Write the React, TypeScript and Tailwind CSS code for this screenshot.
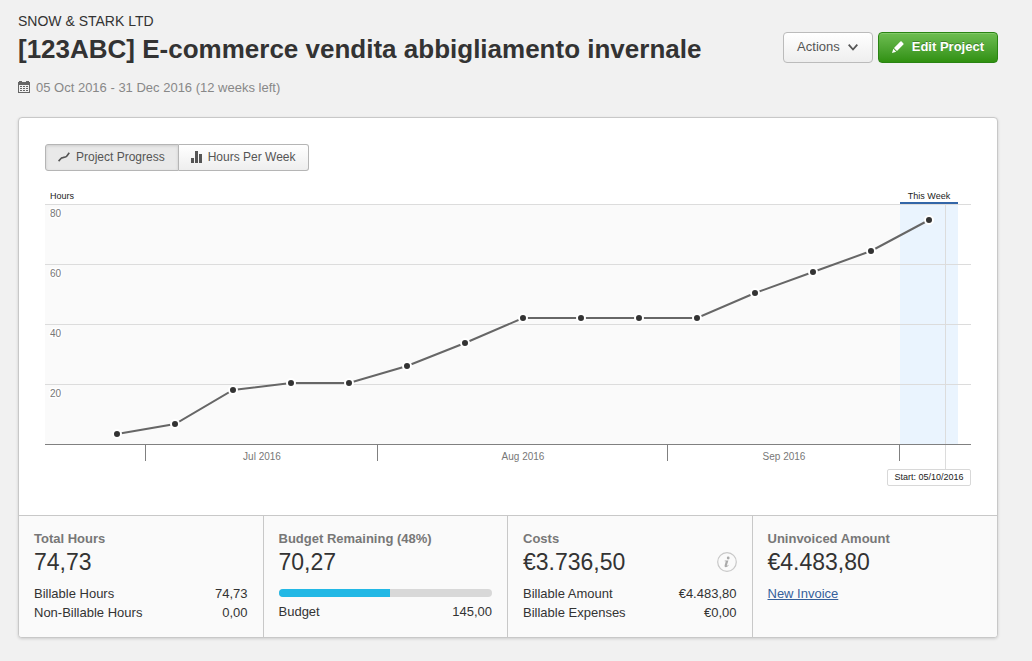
import React from "react";

const values = [247, 237, 203, 196, 196, 179, 156, 131, 131, 131, 131, 106, 85, 64, 33];
const points = values.map((y, i) => ({ x: 72 + i * 58, y }));

const gridLines = [
  { y: 17.5, label: "80" },
  { y: 77.5, label: "60" },
  { y: 137.5, label: "40" },
  { y: 197.5, label: "20" },
];

const months = [
  { x: 217, label: "Jul 2016" },
  { x: 478, label: "Aug 2016" },
  { x: 739, label: "Sep 2016" },
];

function CalendarIcon() {
  return (
    <svg width="12" height="14" viewBox="0 0 12 14" fill="#666" shapeRendering="crispEdges" aria-hidden="true">
      <path d="M0 1h1V0h3v1h4V0h3v1h1v11H0zM1 4v7h10V4z" fillRule="evenodd" />
      <path d="M2 5h2v1H2zM5 5h2v1H5zM8 5h2v1H8zM2 7h2v1H2zM5 7h2v1H5zM8 7h2v1H8zM2 9h2v1H2zM5 9h2v1H5zM8 9h2v1H8z" />
    </svg>
  );
}

function PencilIcon() {
  return (
    <svg width="12" height="12" viewBox="0 0 12 12" fill="#fff" aria-hidden="true">
      <path d="M8.4.6Q9 0 9.6.6L11.4 2.4Q12 3 11.4 3.6L5 10 2 7z" />
      <path d="M1.3 7.8L4.2 10.7 0 12z" />
    </svg>
  );
}

function ProgressIcon() {
  return (
    <svg width="12" height="12" viewBox="0 0 13 12" fill="none" stroke="#555" strokeWidth="1.8" aria-hidden="true">
      <path d="M.6 10.4L3.5 7.4Q4.2 6.7 5.2 6.6L8 6Q9 5.8 9.6 5L12.2 1.4" />
    </svg>
  );
}

function BarsIcon() {
  return (
    <svg width="11" height="12" viewBox="0 0 11 12" fill="#555" shapeRendering="crispEdges" aria-hidden="true">
      <path d="M0 7h3v5H0zM4 0h3v12H4zM8 3h3v9H8z" />
    </svg>
  );
}

function InfoIcon() {
  return (
    <svg width="20" height="20" viewBox="0 0 20 20" aria-hidden="true">
      <circle cx="10" cy="10" r="9.3" fill="none" stroke="#c8c8c8" strokeWidth="1.2" />
      <circle cx="11.2" cy="6" r="1.4" fill="#aaa" />
      <path d="M7.8 8.5H11.4L9.9 13.3Q9.7 14.1 10.3 13.7L11.3 12.8 11.7 13.2Q10.3 15.2 8.7 15.2 7.2 15.2 7.6 13.5L8.8 9.3H7.6z" fill="#aaa" />
    </svg>
  );
}

function ProgressChart() {
  return (
    <svg viewBox="0 0 926 300" className="block h-auto w-full" role="img" aria-label="Project progress in hours">
      <rect x="0" y="17" width="855" height="240" fill="#fafafa" />
      <rect x="855" y="17" width="58" height="240" fill="#eaf4fe" />
      {gridLines.map((g) => (
        <g key={g.label}>
          <line x1="0" x2="926" y1={g.y} y2={g.y} stroke="#dcdcdc" />
          <text x="5" y={g.y + 12.5} fontSize="10" fill="#777" stroke="#fff" strokeWidth="3" strokeLinejoin="round" paintOrder="stroke">
            {g.label}
          </text>
        </g>
      ))}
      <line x1="900.5" x2="900.5" y1="18" y2="282" stroke="#dcdcdc" />
      <rect x="855" y="15" width="58" height="2" fill="#3366a8" />
      <text x="5" y="12" fontSize="9" fill="#222">Hours</text>
      <text x="884" y="12" fontSize="9" fill="#222" textAnchor="middle">This Week</text>
      <line x1="0" x2="926" y1="257.5" y2="257.5" stroke="#808080" />
      {[100.5, 332.5, 622.5, 854.5].map((x) => (
        <line key={x} x1={x} x2={x} y1="258" y2="274" stroke="#808080" />
      ))}
      {months.map((m) => (
        <text key={m.label} x={m.x} y="273" fontSize="10" fill="#777" textAnchor="middle">{m.label}</text>
      ))}
      <polyline points={points.map((p) => `${p.x},${p.y}`).join(" ")} fill="none" stroke="#666" strokeWidth="2" />
      {points.map((p) => (
        <circle key={p.x} cx={p.x} cy={p.y} r="4" fill="#333" stroke="#fff" strokeWidth="2" />
      ))}
      <rect x="842.5" y="282.5" width="83" height="16" rx="1.5" fill="#fff" stroke="#d8d8d8" />
      <text x="884" y="293" fontSize="9" fill="#222" textAnchor="middle">Start: 05/10/2016</text>
    </svg>
  );
}

function Row({ label, value }: { label: string; value: string }) {
  return (
    <div className="flex justify-between leading-[19px]">
      <dt>{label}</dt>
      <dd>{value}</dd>
    </div>
  );
}

function Stat({ title, amount, info, children }: { title: string; amount: string; info?: boolean; children: React.ReactNode }) {
  return (
    <section className="border-r border-[#c8c8c8] px-[15px] pt-[13px] pb-[15px] last:border-r-0">
      <h2 className="font-bold leading-5 text-[#777]">{title}</h2>
      <div className="flex items-center justify-between">
        <p className="text-[23px] leading-[26px]">{amount}</p>
        {info && (
          <button type="button" aria-label="About costs">
            <InfoIcon />
          </button>
        )}
      </div>
      <div className="pt-[9px]">{children}</div>
    </section>
  );
}

export default function App() {
  return (
    <div className="min-h-screen bg-[#f1f1f1] pt-3 pr-[34px] pb-6 pl-[18px] font-['Liberation_Sans',Arial,sans-serif] text-[13px] text-[#333]">
      <header className="flex items-start justify-between">
        <div>
          <p className="text-sm leading-[18px]">SNOW &amp; STARK LTD</p>
          <h1 className="text-[26px] font-bold leading-[38px]">[123ABC] E-commerce vendita abbigliamento invernale</h1>
          <p className="mt-[10px] flex items-center gap-[6px] leading-5 text-[#888]">
            <CalendarIcon />
            05 Oct 2016 - 31 Dec 2016 (12 weeks left)
          </p>
        </div>
        <div className="mt-5 flex gap-[5px]">
          <button
            type="button"
            className="flex h-[31px] items-center gap-2 rounded-[4px] border border-[#bbb] bg-linear-to-b from-white to-[#eee] pr-[14px] pl-[13px] pb-px text-[#555]"
          >
            Actions
            <svg width="10" height="7" viewBox="0 0 10 7" fill="none" stroke="#555" strokeWidth="1.8" aria-hidden="true">
              <path d="M.7.7L5 5.5 9.3.7" />
            </svg>
          </button>
          <button
            type="button"
            className="flex h-[31px] items-center gap-2 rounded-[4px] border border-[#2a8413] bg-linear-to-b from-[#6dbd50] to-[#30910f] px-[13px] pb-px font-bold text-white shadow-[inset_0_1px_0_#82c969] [text-shadow:0_-1px_0_rgba(0,0,0,0.3)]"
          >
            <PencilIcon />
            Edit Project
          </button>
        </div>
      </header>

      <main className="mt-[19px] overflow-hidden rounded-[4px] border border-[#c8c8c8] bg-white shadow-[0_1px_3px_rgba(0,0,0,0.15)]">
        <div className="px-[26px] pt-[26px] pb-7">
          <div className="mb-4 flex text-xs">
            <button
              type="button"
              aria-pressed="true"
              className="flex h-[27px] items-center gap-[6px] rounded-l-[3px] border border-[#b5b5b5] bg-[#e9e9e9] pr-[13px] pl-3 pb-px text-[#555] shadow-[inset_0_1px_3px_rgba(0,0,0,0.12)]"
            >
              <ProgressIcon />
              Project Progress
            </button>
            <button
              type="button"
              aria-pressed="false"
              className="flex h-[27px] items-center gap-[6px] rounded-r-[3px] border border-l-0 border-[#b5b5b5] bg-linear-to-b from-white to-[#eee] px-3 pb-px text-[#555]"
            >
              <BarsIcon />
              Hours Per Week
            </button>
          </div>
          <ProgressChart />
        </div>

        <div className="grid grid-cols-4 border-t border-[#c8c8c8] bg-[#fafafa]">
          <Stat title="Total Hours" amount="74,73">
            <dl>
              <Row label="Billable Hours" value="74,73" />
              <Row label="Non-Billable Hours" value="0,00" />
            </dl>
          </Stat>
          <Stat title="Budget Remaining (48%)" amount="70,27">
            <div className="mt-[5px] mb-[5px] h-2 overflow-hidden rounded-full bg-[#d8d8d8]">
              <div className="h-full w-[52%] bg-[#22b8e5]" />
            </div>
            <dl>
              <Row label="Budget" value="145,00" />
            </dl>
          </Stat>
          <Stat title="Costs" amount="€3.736,50" info>
            <dl>
              <Row label="Billable Amount" value="€4.483,80" />
              <Row label="Billable Expenses" value="€0,00" />
            </dl>
          </Stat>
          <Stat title="Uninvoiced Amount" amount="€4.483,80">
            <a href="#new-invoice" className="leading-[19px] text-[#36609a] underline">New Invoice</a>
          </Stat>
        </div>
      </main>
    </div>
  );
}
